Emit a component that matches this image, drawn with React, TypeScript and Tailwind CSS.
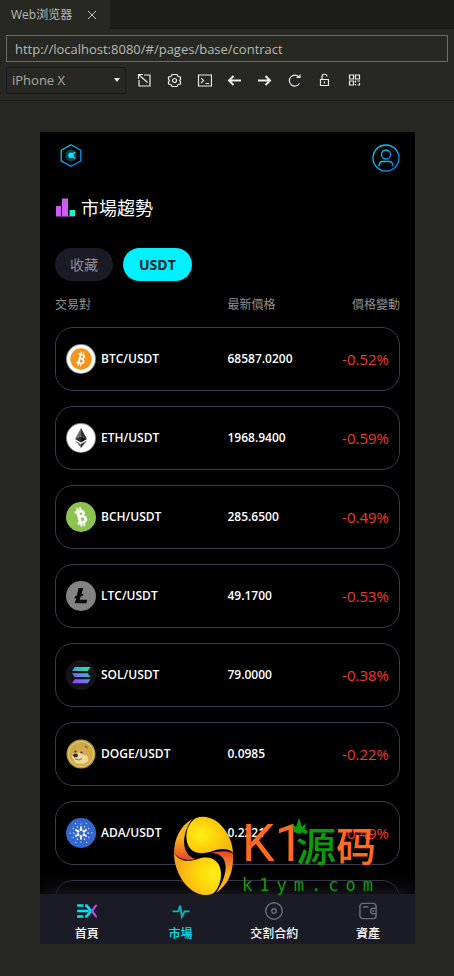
import React, { useState } from 'react';

type Market = { symbol: string; price: string; change: string };

const markets: Market[] = [
  { symbol: 'BTC', price: '68587.0200', change: '-0.52%' },
  { symbol: 'ETH', price: '1968.9400', change: '-0.59%' },
  { symbol: 'BCH', price: '285.6500', change: '-0.49%' },
  { symbol: 'LTC', price: '49.1700', change: '-0.53%' },
  { symbol: 'SOL', price: '79.0000', change: '-0.38%' },
  { symbol: 'DOGE', price: '0.0985', change: '-0.22%' },
  { symbol: 'ADA', price: '0.2221', change: '-0.49%' },
];

const bitcoinSign =
  'M11 8h5.5c2.4 0 3.8 1.2 3.8 3.2 0 1.600-.9 2.600-2.300 2.900 1.900.3 3.100 1.500 3.100 3.500 0 2.700-1.900 4.400-4.900 4.400H11v-2.300h1.500V10.300H11zM15 10.300v3h1.200c1.100 0 1.700-.5 1.700-1.500s-.6-1.500-1.700-1.500zM15 15.600v4h1.500c1.300 0 2-.7 2-2s-.7-2-2-2zM13.300 5.500h1.500v3h-1.500zM16.300 5.500h1.500v3h-1.500zM13.300 21.500h1.500v3h-1.500zM16.300 21.500h1.500v3h-1.500z';

function CoinIcon({ symbol }: { symbol: string }) {
  return (
    <svg viewBox="0 0 30 30" className="size-[30px] shrink-0" aria-hidden="true">
      {symbol === 'BTC' && (
        <>
          <circle cx="15" cy="15" r="15" fill="#8f8f8f" />
          <circle cx="15" cy="15" r="14" fill="#fff" />
          <circle cx="15" cy="15" r="10.700" fill="#f7931a" />
          <path d={bitcoinSign} fill="#fff" fillRule="evenodd" transform="translate(15 15) rotate(14) scale(.76) translate(-15.700 -15)" />
        </>
      )}
      {symbol === 'ETH' && (
        <>
          <circle cx="15" cy="15" r="15" fill="#8f8f8f" />
          <circle cx="15" cy="15" r="14" fill="#fff" />
          <path d="M15 5v8.300l-6 2.800z" fill="#6b6b6b" />
          <path d="M15 5v8.300l6 2.800z" fill="#333" />
          <path d="M15 13.300v6.200l-6-3.400z" fill="#333" />
          <path d="M15 13.300v6.200l6-3.400z" fill="#111" />
          <path d="M9 17.500l6 3.500v4z" fill="#777" />
          <path d="M21 17.500L15 21v4z" fill="#333" />
        </>
      )}
      {symbol === 'BCH' && (
        <>
          <circle cx="15" cy="15" r="15" fill="#8dc351" />
          <path d={bitcoinSign} fill="#fff" stroke="#fff" strokeWidth=".4" fillRule="evenodd" transform="translate(15 15) rotate(-14) scale(.98) translate(-15.700 -15)" />
        </>
      )}
      {symbol === 'LTC' && (
        <>
          <circle cx="15" cy="15" r="15" fill="#838383" />
          <path d="M12.500 7h4.800l-1.900 6.300 2-.8-.6 2.200-2.100.8-.9 3.200h7.400l-.9 3.500H8.700l1.500-5.300-1.900.7.6-2.200 2-.8z" fill="#080808" />
        </>
      )}
      {symbol === 'SOL' && (
        <>
          <defs>
            <linearGradient id="sol" x1="10" y1="23" x2="20" y2="7" gradientUnits="userSpaceOnUse">
              <stop offset="0" stopColor="#9945ff" />
              <stop offset=".5" stopColor="#5f8fe0" />
              <stop offset="1" stopColor="#14f195" />
            </linearGradient>
          </defs>
          <circle cx="15" cy="15" r="14.600" fill="#131418" stroke="#1c1d21" strokeWidth=".8" />
          <path d="M8.800 7H24.500l-2.800 4H6zM6 13.300h15.700l2.800 3.800H8.800zM8.800 19.300H24.500l-2.800 4H6z" fill="url(#sol)" />
        </>
      )}
      {symbol === 'DOGE' && (
        <>
          <circle cx="15" cy="15" r="14.500" fill="#b99a38" />
          <circle cx="15" cy="15" r="12.600" fill="#c9ab4c" stroke="#e6d27b" />
          <path d="M7 15l1-4 4-2 5-.5 2.500-3 2.500 5 1.500 5 2 4-2 4-6 3.500-8-1.500-4-4z" fill="#d8a94e" />
          <path d="M18.500 8l1.500-2 2 4z" fill="#8c6425" />
          <path d="M5.500 17c1-2 3-2.500 5-2l4-2 3 3 4 1 1 5-5 3-8-1z" fill="#eddb9c" />
          <path d="M6.500 16l3-1.500 2.500 1-.5 2.500-3 .5z" fill="#27221d" />
          <circle cx="9.500" cy="12.500" r="1" fill="#27221d" />
          <circle cx="15.500" cy="13.500" r="1.100" fill="#3a2a18" />
          <path d="M9 20l4 1 3-1.500" fill="none" stroke="#8a6a32" />
        </>
      )}
      {symbol === 'ADA' && (
        <>
          <circle cx="15" cy="15" r="15" fill="#3468d1" />
          {[0, 60, 120, 180, 240, 300].map((angle) => (
            <g key={angle} transform={`rotate(${angle} 15 15)`} fill="#fff">
              <circle cx="18" cy="13.300" r="1.400" />
              <circle cx="15" cy="9.300" r="1" />
              <circle cx="18.500" cy="8.800" r=".7" />
              <circle cx="15" cy="6" r=".6" />
              <circle cx="20.300" cy="5.500" r=".6" />
            </g>
          ))}
        </>
      )}
    </svg>
  );
}

function MarketRow({ market }: { market: Market }) {
  return (
    <li className="grid h-16 grid-cols-2 items-center rounded-[18px] border border-[#3b3a50] px-2.5">
      <div className="flex items-center gap-[5px] text-[12px] leading-5 font-semibold text-white">
        <CoinIcon symbol={market.symbol} />
        {market.symbol}/USDT
      </div>
      <div className="flex items-center justify-between">
        <span className="text-[12px] leading-5 font-semibold text-white">{market.price}</span>
        <span className="text-[15px] text-[#f0382a]">{market.change}</span>
      </div>
    </li>
  );
}

const tools = [
  {
    label: 'Detach window',
    art: <path d="M7 2h6v11H2V7M1.500 1.500l9 8M1.500 6V1.500H6" />,
  },
  {
    label: 'Settings',
    art: (
      <>
        <path d="M5 1.500h5l1 2 2.500.5v2.500L12.500 7.500l1 1.500v2l-2.500.5-1 2H5l-1-2-2.500-.5V9l1-1.500-1-1.500V4L4 3.500z" />
        <circle cx="7.500" cy="7.500" r="2" />
      </>
    ),
  },
  {
    label: 'Console',
    art: <path d="M1.500 2h13v11h-13zM4 5l2.500 2.500L4 10M8.500 10.500H12" />,
  },
  { label: 'Back', art: <path strokeWidth="2" d="M14 7.500H2M6.500 3L2 7.500 6.500 12" /> },
  { label: 'Forward', art: <path strokeWidth="2" d="M1 7.500h12M8.500 3L13 7.500 8.500 12" /> },
  { label: 'Reload', art: <path d="M12.500 10.500a5.500 5.500 0 1 1-.5-6.500M9.500 4.500h3.500V1.500" /> },
  { label: 'Unlock', art: <path d="M3.500 6.500h8v6h-8zM5 6.500V4a2.500 2.500 0 0 1 5-.5M7.500 8.500v2" /> },
  {
    label: 'QR code',
    art: <path d="M2.500 2h4v4h-4zM8.500 2h4v4h-4zM2.500 8h4v4h-4zM8.500 7.500v2M10.500 8h2.500M8.500 11v1.500M10.500 12h2v-2" />,
  },
];

const navItems = [
  {
    label: '首頁',
    art: (
      <>
        <path d="M-1 4h7M-1 10h13M-1 16h7" stroke="#00e5f2" strokeWidth="2.800" />
        <path d="M8 4h1.500l5 6-5 6H8" stroke="#00e5f2" strokeWidth="2.800" />
        <path d="M21 4h-1l-4.500 6 4.500 6h1" stroke="#b04fe0" strokeWidth="2.500" />
      </>
    ),
  },
  {
    label: '市場',
    art: <path d="M.5 10.500H7L9 4l2 12.500 3-6h5.500" stroke="#07b6c3" strokeWidth="2" />,
  },
  {
    label: '交割合約',
    art: (
      <>
        <circle cx="10" cy="10" r="9.200" stroke="#6b6b7e" strokeWidth="1.600" />
        <circle cx="10" cy="10" r="2.500" stroke="#6b6b7e" strokeWidth="1.600" />
      </>
    ),
  },
  {
    label: '資產',
    art: (
      <>
        <rect x="1" y="1.500" width="18" height="17" rx="3.500" stroke="#6b6b7e" strokeWidth="1.600" />
        <path d="M4.500 5.500h6M19 7h-3a3 3 0 0 0 0 6h3" stroke="#6b6b7e" strokeWidth="1.600" />
        <circle cx="16" cy="10" r="1" fill="#6b6b7e" />
      </>
    ),
  },
];

function Watermark() {
  return (
    <div className="pointer-events-none absolute bottom-[46px] left-[134px] flex items-start gap-2">
      <svg viewBox="0 0 60 80" className="h-20 w-[60px]" aria-hidden="true">
        <defs>
          <radialGradient id="swirlTop" cx=".3" cy=".5" r=".7">
            <stop offset="0" stopColor="#fff016" />
            <stop offset=".5" stopColor="#fdd20a" />
            <stop offset="1" stopColor="#f6b414" />
          </radialGradient>
          <radialGradient id="swirlBottom" cx=".85" cy=".5" r=".8">
            <stop offset="0" stopColor="#fff016" />
            <stop offset=".5" stopColor="#fdd20a" />
            <stop offset="1" stopColor="#f6a81c" />
          </radialGradient>
          <linearGradient id="swirlLeft" x1="0" y1="0" x2="0" y2="1">
            <stop offset=".45" stopColor="#f8b51b" />
            <stop offset="1" stopColor="#e8432a" />
          </linearGradient>
          <linearGradient id="swirlRight" x1="0" y1="0" x2="0" y2="1">
            <stop offset="0" stopColor="#e8432a" />
            <stop offset=".55" stopColor="#f8b51b" />
          </linearGradient>
        </defs>
        <path d="M18 3C6 18 6 36 18 43c10 3 20-4 27 6 4 10 1 20-3 28C54 62 56 46 50 39 44 32 34 38 26 37 10 34 10 14 22 2z" fill="#000" />
        <path d="M22 2C41-5 59 18 59 37 54 31 44 33 36 36 28 38 20 38 15 31 10 22 12 8 22 2z" fill="url(#swirlTop)" />
        <path d="M0 37C5 46 15 46 24 43 38 38 47 46 47 58 47 68 42 76 38 78 18 84 0 60 0 37z" fill="url(#swirlBottom)" />
        <path d="M18 3C6 10 0 23 0 37 5 44 14 45 22 43 8 40 6 20 18 3z" fill="url(#swirlLeft)" />
        <path d="M42 77C54 69 60 56 59 38 56 34 44 35 37 37 54 37 57 55 42 77z" fill="url(#swirlRight)" />
      </svg>
      <div className="text-[#0b9c0b]">
        <div className="relative flex h-14 items-center text-[40px] leading-none">
          <span className="w-[54px] font-[Roboto,sans-serif] text-[52px] text-[#ff6a1e]">K1</span>
          <span className="font-['Noto_Sans_CJK_SC',sans-serif] font-medium">源</span>
          <span className="font-['Noto_Sans_CJK_SC',sans-serif] font-medium text-[#ff6a1e]">码</span>
          <svg viewBox="0 0 14 16" className="absolute top-0.5 left-[50px] h-4 w-3.5" fill="currentColor" aria-hidden="true">
            <path d="M2 14L0 5l4 4 3-9 3 9 4-4-2 9-5 2z" />
          </svg>
        </div>
        <div className="font-['DejaVu_Sans_Mono',monospace] text-[17px] leading-[26px] tracking-[7px]">k1ym.com</div>
      </div>
    </div>
  );
}

export default function App() {
  const [url, setUrl] = useState('http://localhost:8080/#/pages/base/contract');
  return (
    <div className="flex min-h-screen flex-col bg-[#272822] font-['Open_Sans','Noto_Sans_CJK_SC',sans-serif]">
      <div className="flex h-[29px] bg-[#1c1d19]">
        <div className="flex w-[110px] items-center justify-between bg-[#272822] pr-3 pl-[11px] text-[12px] text-[#b9bab4]">
          Web浏览器
          <button aria-label="Close tab" className="text-[#c5c6c0]">
            <svg viewBox="0 0 12 12" className="size-3" stroke="currentColor" aria-hidden="true">
              <path d="M2 2l8 8M10 2l-8 8" />
            </svg>
          </button>
        </div>
        <div className="flex-1 border-b border-[#161713]" />
      </div>

      <div className="border-b border-[#171814] px-1.5 pt-1.5 pb-1.5">
        <input
          aria-label="Address"
          value={url}
          onChange={(e) => setUrl(e.target.value)}
          className="block h-[27px] w-full border border-[#6d6e69] bg-transparent px-2 text-[13px] text-[#b9bab4] outline-none"
        />
        <div className="mt-[5px] flex items-center">
          <div className="relative w-[120px]">
            <select aria-label="Device" className="block h-[27px] w-full appearance-none border border-[#17182a] bg-transparent px-[5px] text-[13px] text-[#a9aaa5] outline-none">
              <option>iPhone X</option>
            </select>
            <svg viewBox="0 0 6 4" className="pointer-events-none absolute top-[11px] right-1.5 h-1 w-1.5" fill="#e6e6e2" aria-hidden="true">
              <path d="M0 0h6L3 4z" />
            </svg>
          </div>
          <div className="ml-[11px] flex gap-[15px]">
            {tools.map((tool) => (
              <button key={tool.label} aria-label={tool.label}>
                <svg viewBox="0 0 15 15" className="size-[15px]" fill="none" stroke="#ecece8" strokeWidth="1.200" aria-hidden="true">
                  {tool.art}
                </svg>
              </button>
            ))}
          </div>
        </div>
      </div>

      <div className="flex-1 pt-[31px] pr-[39px] pl-10">
        <div className="relative flex h-[812px] flex-col overflow-hidden bg-black font-['Open_Sans','Noto_Sans_CJK_TC',sans-serif]">
          <header className="flex items-start justify-between px-[15px] pt-3">
            <svg viewBox="0 0 24 24" className="ml-1 size-6" aria-hidden="true">
              <defs>
                <linearGradient id="cyanBlue" x1="0" y1="0" x2="1" y2="1">
                  <stop offset="0" stopColor="#00e1f5" />
                  <stop offset="1" stopColor="#0a78f0" />
                </linearGradient>
              </defs>
              <path d="M12 .8l9.800 5.500v10.700L12 22.300 2.200 17V6.300z" fill="none" stroke="url(#cyanBlue)" strokeWidth="1.300" />
              <path d="M12 5l5.500 3v6.500L12 17.700 6.500 14.500V8z" fill="#07424f" />
              <circle cx="12" cy="11.300" r="2.800" fill="#00e9f7" />
              <path d="M13 10.500l3-2.500M13 12l3 2.500" stroke="#00e9f7" strokeWidth="1.400" />
            </svg>
            <button aria-label="Profile">
              <svg viewBox="0 0 28 28" className="size-7" fill="none" stroke="url(#cyanBlue)" strokeWidth="1.300" aria-hidden="true">
                <circle cx="14" cy="14" r="13" />
                <circle cx="14" cy="10.500" r="4.500" />
                <path d="M7 22.500c0-3.500 1.500-5 4-5h6c2.500 0 4 1.500 4 5" />
              </svg>
            </button>
          </header>

          <main className="flex min-h-0 flex-1 flex-col px-[15px] pt-[22px]">
            <h1 className="flex items-center gap-1.5 text-[18px] leading-7 text-white">
              <svg viewBox="0 0 20 20" className="size-5" aria-hidden="true">
                <path d="M1 8h5v10H1zM7 .5h6V18H7z" fill="#cf5bf5" />
                <path d="M14.500 12H20v6h-5.500z" fill="#22f5c5" />
                <path d="M1 18.500h19" stroke="#64307a" />
              </svg>
              市場趨勢
            </h1>
            <div className="mt-[26px] flex gap-2.5 text-[14px]">
              <button className="h-[33px] rounded-full bg-[#1b1b25] px-[15px] text-[#8e8e93]">收藏</button>
              <button className="h-[33px] rounded-full bg-[#00f0ff] px-4 font-bold text-[#17202a]">USDT</button>
            </div>
            <div className="mt-[15px] grid grid-cols-2 text-[12px] leading-[18px] text-[#8e8e8e]">
              <span>交易對</span>
              <div className="flex justify-between">
                <span>最新價格</span>
                <span>價格變動</span>
              </div>
            </div>
            <ul className="mt-[13px] flex flex-col gap-[15px]">
              {markets.map((market) => (
                <MarketRow key={market.symbol} market={market} />
              ))}
              <li className="h-16 rounded-[18px] border border-[#3b3a50]" />
            </ul>
          </main>

          <nav className="relative grid h-[50px] shrink-0 grid-cols-4 bg-[#1b1b25] shadow-[0_-4px_20px_#1b1b25]">
            {navItems.map((item) => (
              <a
                key={item.label}
                href="#"
                className={`flex flex-col items-center pt-2 text-[12px] leading-5 font-medium ${item.label === '市場' ? 'text-[#00e5f2]' : 'text-white'}`}
              >
                <svg viewBox="0 0 20 20" className="mb-1 size-[18px] overflow-visible" fill="none" aria-hidden="true">
                  {item.art}
                </svg>
                {item.label}
              </a>
            ))}
          </nav>
          <Watermark />
        </div>
      </div>
    </div>
  );
}
